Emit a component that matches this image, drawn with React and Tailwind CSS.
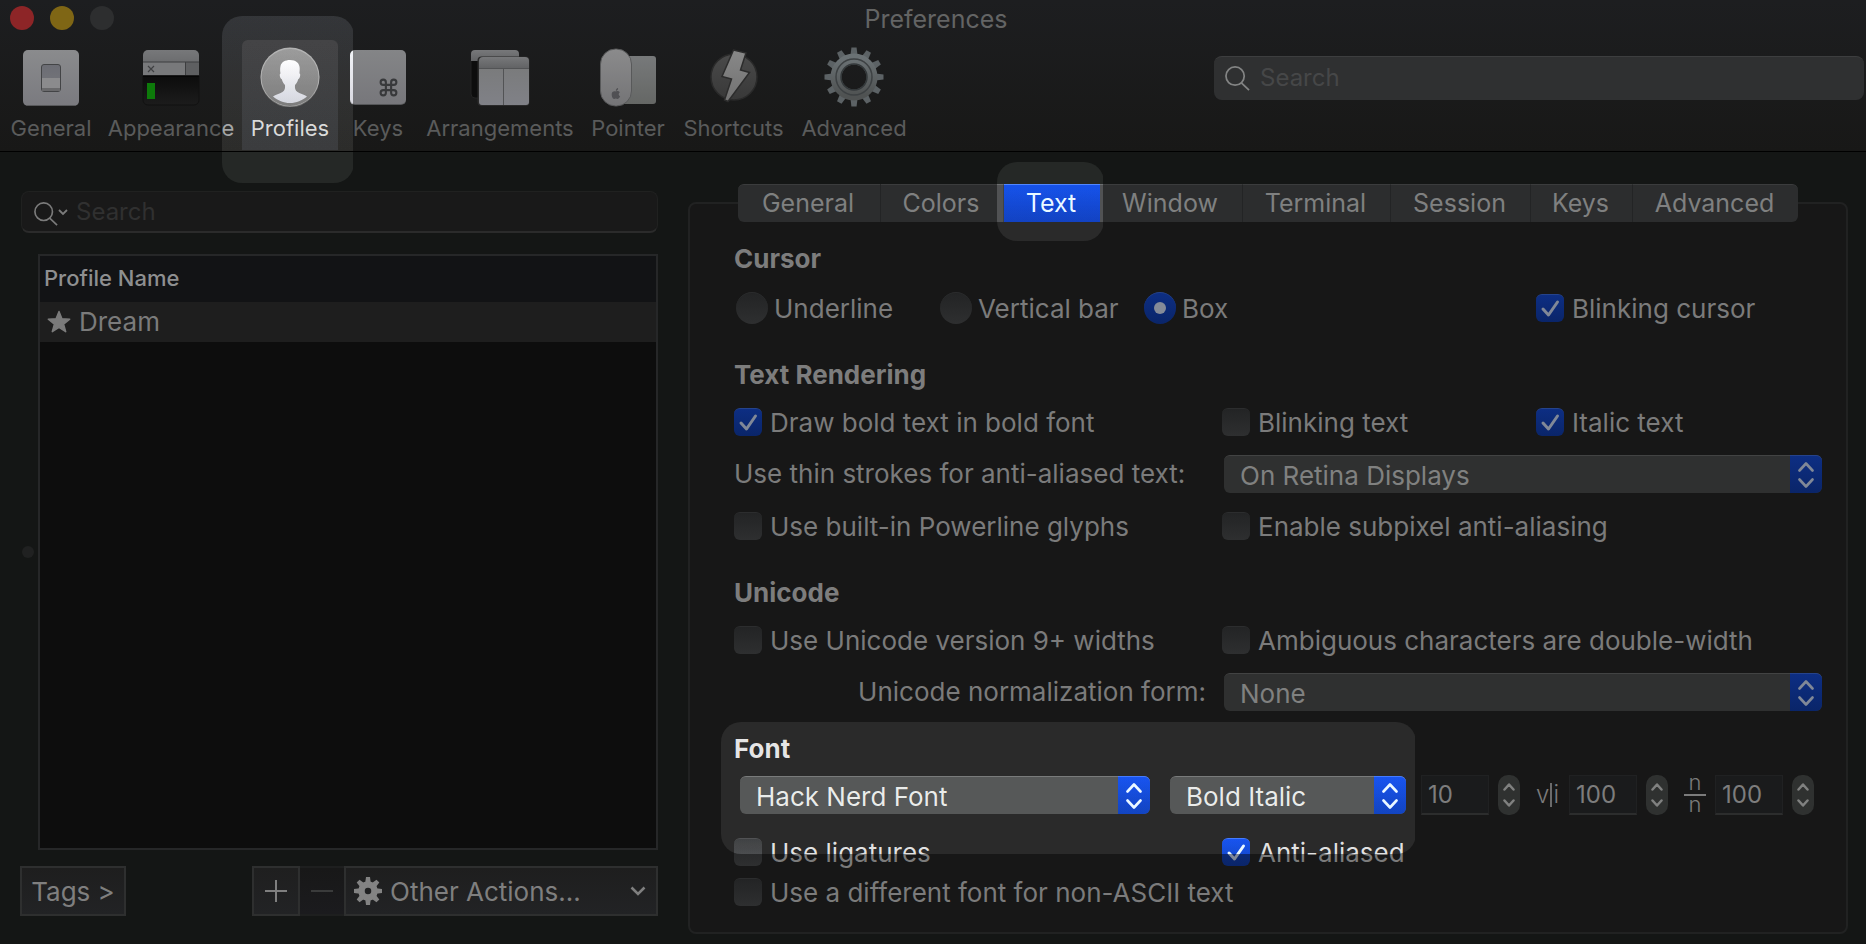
import React from "react";
import { Command } from "lucide-react";

const metal = (id, a, b) => (
  <linearGradient id={id} x1="0" y1="0" x2="0" y2="1">
    <stop offset="0" stopColor={a} />
    <stop offset="1" stopColor={b} />
  </linearGradient>
);

function GeneralIcon() {
  return (
    <svg viewBox="0 0 60 60" className="size-[60px]" aria-hidden="true">
      <defs>
        {metal("gen", "#8a8b8d", "#7a7a7f")}
        {metal("genSw", "#6c6d74", "#75767b")}
      </defs>
      <rect x="2" y="3" width="56" height="56" rx="5" fill="url(#gen)" />
      <path d="M6 58.5h48" stroke="#58595b" />
      <rect x="20.500" y="17.500" width="19" height="27" rx="2.500" fill="url(#genSw)" stroke="#434446" />
      <rect x="21" y="31" width="18" height="10" fill="#8b8b8d" />
      <rect x="21" y="41" width="18" height="3" fill="#69696b" />
    </svg>
  );
}

function AppearanceIcon() {
  return (
    <svg viewBox="0 0 60 60" className="size-[60px]" aria-hidden="true">
      <defs>
        {metal("app", "#77787a", "#5f6062")}
        {metal("appB", "#0c0c0c", "#1c1c1c")}
      </defs>
      <path d="M2 29h56v24a5 5 0 0 1-5 5H7a5 5 0 0 1-5-5z" fill="url(#appB)" stroke="#111" />
      <path d="M2 29V8a5 5 0 0 1 5-5h46a5 5 0 0 1 5 5v21z" fill="url(#app)" />
      <rect x="2" y="15" width="42" height="13" fill="#78797b" />
      <rect x="44.500" y="15" width="13.500" height="13" fill="#5e5f61" />
      <path d="M2 15h56M44.500 15v13" stroke="#3d3e40" />
      <path d="M2 29h56" stroke="#050505" strokeWidth="1.500" />
      <path d="M7 19l6 6M13 19l-6 6" stroke="#3f4042" strokeWidth="1.200" />
      <rect x="6" y="36" width="8" height="16" fill="#0d7a0a" />
    </svg>
  );
}

function ProfilesIcon() {
  return (
    <svg viewBox="0 0 60 60" className="size-[60px]" aria-hidden="true">
      <defs>
        {metal("pro", "#555555", "#444444")}
        {metal("proM", "#8b8b8b", "#74757a")}
      </defs>
      <circle cx="30" cy="31" r="29.500" fill="#363636" />
      <circle cx="30" cy="30" r="29.500" fill="#626262" />
      <circle cx="30" cy="30.500" r="28.500" fill="url(#pro)" />
      <path
        d="M30 13c6 0 9.500 3 9.700 8 .1 2-.2 4-.2 5.500 1.300 0 .8 5-1.300 5.700-.8 3-2 4.600-3.200 5.800-.3 3 .1 5.500 2.500 7 3 1.900 7 2.500 9.500 4.500C42 53.500 36.500 56 30 56s-12-2.500-17-6.500c2.500-2 6.500-2.600 9.500-4.500 2.400-1.500 2.800-4 2.500-7-1.200-1.200-2.400-2.800-3.200-5.800-2.100-.7-2.600-5.700-1.300-5.700-.3-1.500-.7-4.500 0-7.500C21.500 15 25 13 30 13z"
        fill="url(#proM)"
      />
    </svg>
  );
}

function KeysIcon() {
  return (
    <span className="flex size-[60px] p-0.5 pt-[3px]">
      <span className="flex flex-1 items-end justify-end rounded-[5px] border-b border-[#555658] bg-linear-to-b from-[#848587] to-[#77777b] p-1.5 pr-[7px]">
        <Command size={21} strokeWidth={2.4} className="text-[#38393b]" aria-hidden="true" />
      </span>
    </span>
  );
}

function ArrangementsIcon() {
  return (
    <svg viewBox="0 0 60 60" className="size-[60px]" aria-hidden="true">
      <defs>
        {metal("arr", "#77787a", "#626365")}
        {metal("arrB", "#7a7b7c", "#808187")}
      </defs>
      <path d="M1 13h40v38H5a4 4 0 0 1-4-4z" fill="#0d0d0d" stroke="#222" />
      <path d="M1 14V7a4 4 0 0 1 4-4h40a4 4 0 0 1 4 4v7z" fill="url(#arr)" />
      <rect x="7.500" y="9.500" width="52" height="49.500" rx="4" fill="#2a2a2a" />
      <path d="M9 21h50v34a3 3 0 0 1-3 3H12a3 3 0 0 1-3-3z" fill="url(#arrB)" />
      <path d="M9 21v-7a4 4 0 0 1 4-4h42a4 4 0 0 1 4 4v7z" fill="url(#arr)" />
      <path d="M9 21.500h50M33.500 22v36" stroke="#525355" />
    </svg>
  );
}

function PointerIcon() {
  return (
    <svg viewBox="0 0 60 60" className="size-[60px]" aria-hidden="true">
      <defs>
        {metal("ptA", "#77797a", "#656765")}
        {metal("ptB", "#8b8b8c", "#747476")}
      </defs>
      <path d="M24 9h31a3 3 0 0 1 3 3v42a3 3 0 0 1-3 3H24z" fill="url(#ptA)" />
      <rect x="2.500" y="2" width="31" height="57" rx="15" fill="url(#ptB)" stroke="#58595a" />
      <path d="M18 44.500c1.500-.8 3-.3 3.800.7-1.600 1.200-1.400 3.200.3 4.100-.7 2-1.800 2.700-2.600 2.700-.7 0-1-.4-1.700-.4s-1 .4-1.600.4c-2 0-3.500-5.200-1.700-7 1-1 2.300-.9 3.500-.5zM17.800 43.800c0-1.600 1-2.600 2.300-2.900.1 1.700-.9 2.800-2.300 2.900z" fill="#505053" />
    </svg>
  );
}

function ShortcutsIcon() {
  return (
    <svg viewBox="0 0 60 60" className="size-[60px]" aria-hidden="true">
      <defs>
        {metal("shA", "#4a4a4a", "#383838")}
        {metal("shB", "#888888", "#727272")}
      </defs>
      <circle cx="30" cy="30" r="23" fill="url(#shA)" stroke="#2a2a2a" strokeWidth="1.500" />
      <path d="M29.500 3l12.500 3-5.500 17 9 2.500L24 54.500l-3.500-1.500 7-21-9.500-2.500z" fill="url(#shB)" stroke="#2c2c2c" strokeWidth="1.500" />
    </svg>
  );
}

const TEETH = Array.from({ length: 12 }, (_, i) => i * 30);

function AdvancedIcon() {
  return (
    <svg viewBox="0 0 60 60" className="size-[60px]" aria-hidden="true">
      <defs>{metal("adv", "#6a7174", "#4f5252")}</defs>
      {TEETH.map((a) => (
        <path key={a} d="M27.400 0.500h5.200l1.400 12h-8z" fill="#5c6265" transform={`rotate(${a} 30 30)`} />
      ))}
      <circle cx="30" cy="30" r="18" fill="none" stroke="url(#adv)" strokeWidth="11" />
      <circle cx="30" cy="30" r="18" fill="none" stroke="#3d4143" strokeWidth="1.500" />
      <circle cx="30" cy="30" r="13" fill="none" stroke="#33383a" strokeWidth="1.500" />
    </svg>
  );
}

function SmallGear() {
  return (
    <svg viewBox="0 0 28 28" className="size-7" aria-hidden="true">
      {[0, 45, 90, 135, 180, 225, 270, 315].map((a) => (
        <path key={a} d="M12 0h4l.8 6h-5.600z" fill="#838383" transform={`rotate(${a} 14 14)`} />
      ))}
      <circle cx="14" cy="14" r="6.500" fill="none" stroke="#838383" strokeWidth="6.500" />
    </svg>
  );
}

function Magnifier({ className }) {
  return (
    <svg viewBox="0 0 26 26" fill="none" stroke="currentColor" strokeWidth="1.800" className={className} aria-hidden="true">
      <circle cx="10.500" cy="10.500" r="9.500" />
      <path d="M17 17.500l8 7.500" />
    </svg>
  );
}

const TOOLBAR = [
  { label: "General", icon: GeneralIcon, width: "w-[82px]" },
  { label: "Appearance", icon: AppearanceIcon, width: "w-[124px]" },
  { label: "Profiles", icon: ProfilesIcon, width: "w-[80px]", active: true },
  { label: "Keys", icon: KeysIcon, width: "w-[62px]" },
  { label: "Arrangements", icon: ArrangementsIcon, width: "w-[148px]" },
  { label: "Pointer", icon: PointerIcon, width: "w-[74px]" },
  { label: "Shortcuts", icon: ShortcutsIcon, width: "w-[103px]" },
  { label: "Advanced", icon: AdvancedIcon, width: "w-[104px]" },
];

function Spotlight({ className }) {
  return (
    <div
      aria-hidden="true"
      className={`pointer-events-none absolute z-10 rounded-[20px] backdrop-brightness-[1.83] ${className}`}
    />
  );
}

function ToolbarItem({ label, icon: Icon, width, active }) {
  return (
    <div className={`relative flex shrink-0 justify-center ${width}`}>
      <button
        type="button"
        className={`flex h-[110px] flex-col items-center px-2 pt-[7px] text-[22px] leading-8 whitespace-nowrap ${
          active ? "w-24 shrink-0 rounded-t-md bg-linear-to-b from-[#252526] to-[#202122] text-[#777777]" : "text-[#5a5b5b]"
        }`}
      >
        <Icon />
        <span className="mt-[5px]">{label}</span>
      </button>
      {active && <Spotlight className="-left-7 -right-6 -top-6 h-[167px]" />}
    </div>
  );
}

function Toolbar() {
  return (
    <header className="border-b border-black bg-linear-to-b from-[#1d1e20] to-[#181817]">
      <div className="grid h-10 grid-cols-[1fr_auto_1fr] items-center px-2.5">
        <div className="flex gap-4 pb-1">
          <button type="button" aria-label="Close" className="size-6 rounded-full bg-[#8d2527]" />
          <button type="button" aria-label="Minimize" className="size-6 rounded-full bg-[#7f6615]" />
          <button type="button" aria-label="Zoom" className="size-6 rounded-full bg-[#2d2e2f]" />
        </div>
        <h1 className="pb-0.5 pl-1.5 text-[25px] leading-9 text-[#636464]">Preferences</h1>
      </div>
      <div className="flex h-[111px] items-start justify-between gap-8 pr-0.5 pl-2.5">
        <nav className="flex gap-[17px]">
          {TOOLBAR.map((item) => (
            <ToolbarItem key={item.label} {...item} />
          ))}
        </nav>
        <label className="mt-4 flex h-11 w-[650px] items-center gap-2.5 rounded-lg border-t border-[#3d3e3f] bg-[#2f3031] pl-[11px]">
          <Magnifier className="size-[25px] text-[#838484]" />
          <input
            type="text"
            aria-label="Search preferences"
            placeholder="Search"
            className="h-full min-w-0 flex-1 bg-transparent pb-0.5 text-2xl text-[#8a8a8a] outline-none placeholder:text-[#464748]"
          />
        </label>
      </div>
    </header>
  );
}

function Sidebar() {
  return (
    <aside className="flex w-[658px] shrink-0 flex-col pb-7 pt-[39px]">
      <label className="ml-[21px] flex h-[42px] items-center rounded-lg border border-b-2 border-[#202120] border-b-[#2b2b2b] bg-[#191919] pl-3 text-[#7b7b7b]">
        <Magnifier className="mt-1 size-6" />
        <svg viewBox="0 0 10 8" className="size-2.5" fill="none" stroke="currentColor" strokeWidth="1.800" aria-hidden="true">
          <path d="M1 2l4 4 4-4" />
        </svg>
        <input
          type="text"
          aria-label="Search profiles"
          placeholder="Search"
          className="ml-2 h-full min-w-0 flex-1 bg-transparent text-2xl outline-none placeholder:text-[#303030]"
        />
      </label>
      <div className="mt-[21px] flex flex-1 items-stretch pl-[22px]">
        <span className="-mr-1 size-3 shrink-0 self-center rounded-full bg-[#202121]" />
        <div className="ml-2 flex-1 border-2 border-[#262728] bg-[#0d0d0d]">
          <table className="w-full border-collapse text-left">
            <thead>
              <tr className="h-[46px] bg-[#121315]">
                <th className="pb-0.5 pl-1 text-[22px] font-medium text-[#8e8f90]">Profile Name</th>
              </tr>
            </thead>
            <tbody>
              <tr className="h-10 bg-[#1e1e1e]">
                <td className="text-[26px] leading-10 text-[#7b7b7b]">
                  <span className="flex items-center gap-2 pl-[7px]">
                    <svg viewBox="0 0 24 24" className="size-6" fill="currentColor" stroke="currentColor" strokeWidth="1.500" strokeLinejoin="round" aria-hidden="true">
                      <path d="M12 1.500l2.900 7.300 7.800.4-6.100 4.900 2.100 7.600L12 17.400l-6.700 4.300 2.100-7.600-6.100-4.900 7.800-.4z" />
                    </svg>
                    Dream
                  </span>
                </td>
              </tr>
            </tbody>
          </table>
        </div>
      </div>
      <div className="mt-4 ml-5 flex h-[50px] justify-between text-[26px] text-[#7f7f7f]">
        <button type="button" className="w-[106px] border-2 border-[#2e2f2f] bg-linear-to-b from-[#1e1e1e] to-[#222325] whitespace-nowrap">
          Tags &gt;
        </button>
        <div className="flex">
          <button type="button" aria-label="Add profile" className="flex w-12 items-center justify-center border-2 border-[#2e2f2f] bg-linear-to-b from-[#1f1f1f] to-[#222325]">
            <svg viewBox="0 0 22 22" className="size-[22px]" stroke="currentColor" strokeWidth="2" aria-hidden="true">
              <path d="M11 0v22M0 11h22" />
            </svg>
          </button>
          <button type="button" aria-label="Remove profile" className="flex w-11 items-center justify-center border-y-2 border-[#1e1f1f] bg-linear-to-b from-[#181818] to-[#1b1b1e]">
            <svg viewBox="0 0 22 22" className="size-[22px]" stroke="#3a3b3b" strokeWidth="2" aria-hidden="true">
              <path d="M0 11h22" />
            </svg>
          </button>
          <label className="relative flex w-[314px] items-center border-2 border-[#2e2f2f] bg-linear-to-b from-[#1e1e1e] to-[#222325]">
            <span className="pointer-events-none absolute left-2">
              <SmallGear />
            </span>
            <select aria-label="Other Actions" className="h-full w-full appearance-none bg-transparent pl-11 outline-none">
              <option>Other Actions...</option>
            </select>
            <svg viewBox="0 0 16 10" className="pointer-events-none absolute right-2.5 w-4" fill="none" stroke="currentColor" strokeWidth="2.500" aria-hidden="true">
              <path d="M1.500 1.500l6.500 6.500 6.500-6.500" />
            </svg>
          </label>
        </div>
      </div>
    </aside>
  );
}

const TABS = [
  { label: "General", width: "w-[143px]" },
  { label: "Colors", width: "w-[123px]" },
  { label: "Text", width: "w-[96px]", active: true },
  { label: "Window", width: "w-[143px]" },
  { label: "Terminal", width: "w-[148px]" },
  { label: "Session", width: "w-[140px]" },
  { label: "Keys", width: "w-[102px]" },
  { label: "Advanced", width: "w-[165px]" },
];

function Tabs() {
  return (
    <div role="tablist" className="-mt-5 flex h-[38px] justify-center text-[25px]">
      {TABS.map(({ label, width, active }) => (
        <div key={label} className={`group relative ${width}`}>
          <button
            type="button"
            role="tab"
            aria-selected={!!active}
            className={`h-full w-full border-t pr-0.5 pb-0.5 text-center leading-8 group-first:rounded-l-md group-last:rounded-r-md ${
              active
                ? "border-[#2c4a91] bg-linear-to-b from-[#0c2d80] to-[#0a246a] text-[#808897]"
                : "border-r border-[#3b3c3d] border-r-[#232425] bg-[#2c2d2e] text-[#7f8080] group-last:border-r-0"
            }`}
          >
            {label}
          </button>
          {active && <Spotlight className="-right-1 -left-[7px] -top-[22px] h-[79px]" />}
        </div>
      ))}
    </div>
  );
}

function Heading({ children }) {
  return <h2 className="h-10 text-[26px] leading-10 font-bold text-[#7d7d7d]">{children}</h2>;
}

function Check({ label, checked }) {
  return (
    <label className="flex h-10 items-center gap-2 whitespace-nowrap">
      <span className="relative flex size-7">
        <input
          type="checkbox"
          defaultChecked={checked}
          className="peer size-7 appearance-none rounded-md border-t border-[#2c2d2e] bg-linear-to-b from-[#232425] to-[#2e2f30] checked:border-[#25438c] checked:from-[#0d2e83] checked:to-[#0a2569]"
        />
        <svg viewBox="0 0 28 28" className="pointer-events-none absolute inset-0 hidden peer-checked:block" fill="none" stroke="#808897" strokeWidth="3" strokeLinecap="round" strokeLinejoin="round" aria-hidden="true">
          <path d="M7 15l5.500 6L21.500 8" />
        </svg>
      </span>
      {label}
    </label>
  );
}

function Radio({ label, checked, className }) {
  return (
    <label className={`flex h-10 items-center gap-1.5 whitespace-nowrap ${className}`}>
      <span className="relative flex size-8 items-center justify-center">
        <input
          type="radio"
          name="cursor"
          defaultChecked={checked}
          className="peer size-8 appearance-none rounded-full border-t border-[#2c2d2e] bg-linear-to-b from-[#232425] to-[#2e2f30] checked:border-[#25438c] checked:from-[#0d2e83] checked:to-[#0a2569]"
        />
        <span className="pointer-events-none absolute hidden size-3 rounded-full bg-[#858b98] peer-checked:block" />
      </span>
      {label}
    </label>
  );
}

function Popup({ id, label, value, className }) {
  return (
    <span className={`relative flex h-[38px] ${className}`}>
      <select
        id={id}
        aria-label={label}
        className="h-full w-full appearance-none rounded-md border-t border-[#424343] bg-[#2f3030] pb-0.5 pl-4 text-[26px] text-[#808180] outline-none"
      >
        <option>{value}</option>
      </select>
      <span className="pointer-events-none absolute inset-y-0 right-0 flex w-8 items-center justify-center rounded-r-md border-t border-[#25438c] bg-linear-to-b from-[#0d2e83] to-[#0a2569]">
        <svg viewBox="0 0 16 26" className="h-[26px] w-4" fill="none" stroke="#808897" strokeWidth="2.600" strokeLinecap="round" strokeLinejoin="round" aria-hidden="true">
          <path d="M1.500 8.500L8 1.500l6.500 7M1.500 17.500L8 24.500l6.500-7" />
        </svg>
      </span>
    </span>
  );
}

function Chevron({ up }) {
  return (
    <svg viewBox="0 0 12 8" className="h-2 w-3" fill="none" stroke="#808180" strokeWidth="2.500" strokeLinecap="round" strokeLinejoin="round" aria-hidden="true">
      <path d={up ? "M1.500 6.500L6 1.500l4.500 5" : "M1.500 1.500L6 6.500l4.500-5"} />
    </svg>
  );
}

function NumberField({ label, value }) {
  return (
    <span className="flex gap-[9px]">
      <input
        type="text"
        aria-label={label}
        defaultValue={value}
        className="h-10 w-[68px] border border-b-2 border-[#202122] border-b-[#2c2d2d] bg-[#1a1b1c] pl-1.5 text-[24px] text-[#7d7d7d] outline-none"
      />
      <span className="flex h-10 w-[22px] flex-col rounded-[10px] bg-[#2f3130]">
        <button type="button" aria-label={`Increase ${label}`} className="flex flex-1 items-center justify-center pt-1">
          <Chevron up />
        </button>
        <button type="button" aria-label={`Decrease ${label}`} className="flex flex-1 items-center justify-center pb-1">
          <Chevron />
        </button>
      </span>
    </span>
  );
}

const GRID = "grid grid-cols-[488px_314px_1fr]";

function TextPanel() {
  return (
    <main className="mt-[50px] mr-[18px] mb-2.5 ml-[30px] flex-1 rounded-lg border-2 border-[#212222] bg-[#171717] text-[26px] text-[#7b7b7b]">
      <Tabs />
      <div className="pt-[17px] pr-6 pb-5 pl-11">
        <section>
          <Heading>Cursor</Heading>
          <div className={`mt-[9px] ${GRID}`}>
            <div className="col-span-2 flex pl-0.5">
              <Radio label="Underline" className="w-[204px]" />
              <Radio label="Vertical bar" className="w-[204px]" />
              <Radio label="Box" checked />
            </div>
            <Check label="Blinking cursor" checked />
          </div>
        </section>
        <section className="mt-[27px]">
          <Heading>Text Rendering</Heading>
          <div className={`mt-[7px] ${GRID}`}>
            <Check label="Draw bold text in bold font" checked />
            <Check label="Blinking text" />
            <Check label="Italic text" checked />
          </div>
          <div className="mt-3 flex h-10 items-center">
            <label htmlFor="strokes" className="w-[490px] shrink-0 pb-0.5 whitespace-nowrap">
              Use thin strokes for anti-aliased text:
            </label>
            <Popup id="strokes" value="On Retina Displays" className="flex-1" />
          </div>
          <div className={`mt-3 ${GRID}`}>
            <Check label="Use built-in Powerline glyphs" />
            <Check label="Enable subpixel anti-aliasing" />
          </div>
        </section>
        <section className="mt-[27px]">
          <Heading>Unicode</Heading>
          <div className={`mt-[7px] ${GRID}`}>
            <Check label="Use Unicode version 9+ widths" />
            <Check label="Ambiguous characters are double-width" />
          </div>
          <div className="mt-3 flex h-10 items-center">
            <label htmlFor="normalization" className="w-[490px] shrink-0 pr-[18px] pb-0.5 text-right whitespace-nowrap">
              Unicode normalization form:
            </label>
            <Popup id="normalization" value="None" className="flex-1" />
          </div>
        </section>
        <section className="relative mt-[17px]">
          <Heading>Font</Heading>
          <div className="mt-1.5 flex h-10 items-center pl-1.5">
            <Popup label="Font family" value="Hack Nerd Font" className="w-[410px]" />
            <Popup label="Font style" value="Bold Italic" className="ml-5 w-[236px]" />
            <div className="ml-[15px] flex items-center">
              <NumberField label="font size" value="10" />
              <span className="flex w-[49px] items-center justify-end gap-px pr-2.5 text-[24px] font-light" aria-hidden="true">
                v<span className="h-6 w-0.5 bg-[#6b6b6b]" />i
              </span>
              <NumberField label="horizontal spacing" value="100" />
              <span className="flex w-[47px] flex-col items-end pr-[9px] pb-1 text-[22px] leading-4 font-light" aria-hidden="true">
                <span className="w-[22px] pb-1 text-center">n</span>
                <span className="h-0.5 w-[22px] bg-[#7b7b7b]" />
                <span className="w-[22px] text-center">n</span>
              </span>
              <NumberField label="vertical spacing" value="100" />
            </div>
          </div>
          <div className={`mt-[17px] ${GRID}`}>
            <Check label="Use ligatures" />
            <Check label="Anti-aliased" checked />
          </div>
          <Check label="Use a different font for non-ASCII text" />
          <Spotlight className="-top-[7px] -left-[13px] h-[132px] w-[695px]" />
        </section>
      </div>
    </main>
  );
}

export default function App() {
  return (
    <div className="flex min-h-screen flex-col overflow-x-hidden border-b border-black bg-[#141615] font-['Inter',sans-serif]">
      <Toolbar />
      <div className="flex flex-1">
        <Sidebar />
        <TextPanel />
      </div>
    </div>
  );
}
